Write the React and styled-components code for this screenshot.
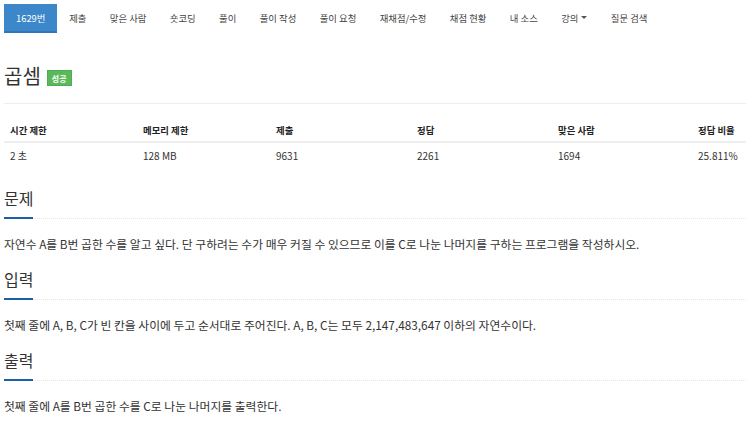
import React from "react";
import styled, { createGlobalStyle } from "styled-components";

const Global = createGlobalStyle`
  html, body { margin: 0; padding: 0; background: #fff; }
  body {
    font-family: "Noto Sans CJK KR", "Noto Sans", sans-serif;
    color: #333;
    font-size: 11px;
  }
`;

const Page = styled.div`
  padding: 4px 4px 0 4px;
  width: 742px;
`;

const Nav = styled.ul`
  display: flex;
  list-style: none;
  margin: 0;
  padding: 0;
  height: 29px;
`;

const NavItem = styled.li`
  display: flex;
  align-items: center;
  padding: 0 ${(p) => p.$px || 11.7}px;
  height: 29px;
  font-size: 9.4px;
  color: ${(p) => (p.$active ? "#fff" : "#444")};
  background: ${(p) => (p.$active ? "#3b87c9" : "transparent")};
  border-bottom: ${(p) => (p.$active ? "2px solid #2e77b8" : "2px solid transparent")};
  box-sizing: border-box;
  white-space: nowrap;
`;

const Caret = styled.span`
  display: inline-block;
  width: 0;
  height: 0;
  margin-left: 3px;
  border-left: 3px solid transparent;
  border-right: 3px solid transparent;
  border-top: 3px solid #555;
`;

const TitleRow = styled.div`
  display: flex;
  align-items: flex-end;
  gap: 6px;
  margin-top: 29px;
  padding-bottom: 13px;
  border-bottom: 1px solid #eee;
`;

const Title = styled.h1`
  margin: 0;
  font-size: 20px;
  font-weight: 400;
  line-height: 28px;
  color: #333;
`;

const Badge = styled.span`
  display: inline-flex;
  align-items: center;
  justify-content: center;
  height: 16px;
  padding: 0 4px;
  margin-bottom: 4px;
  background: #5cb85c;
  border: 1px solid #4cae4c;
  color: #fff;
  font-size: 8px;
  font-weight: 700;
  box-sizing: border-box;
`;

const Table = styled.table`
  width: 100%;
  table-layout: fixed;
  border-collapse: collapse;
  margin-top: 15px;
  font-size: 10px;
`;

const Th = styled.th`
  text-align: left;
  font-weight: 700;
  font-size: 9.4px;
  line-height: 14px;
  padding: 4px 6px 4px 6px;
  border-bottom: 2px solid #eee;
  color: #222;
  width: ${(p) => p.$w}px;
`;

const Td = styled.td`
  padding: 6px 6px;
  line-height: 14px;
  color: #333;
`;

const Section = styled.section`
  margin-top: ${(p) => p.$mt}px;
`;

const Headline = styled.div`
  display: flex;
  align-items: flex-end;
  border-bottom: 1px dotted #e4e4e4;
`;

const HeadText = styled.h2`
  margin: 0 0 -1px 0;
  font-size: 16px;
  font-weight: 400;
  line-height: 22px;
  padding-bottom: 8px;
  border-bottom: 2px solid #1d5ea8;
  color: #333;
`;

const Para = styled.p`
  margin: 16px 0 0 0;
  font-size: 11.8px;
  line-height: 18px;
  color: #333;
`;

const navs = [
  ["1629번", true, 12],
  ["제출"],
  ["맞은 사람"],
  ["숏코딩"],
  ["풀이"],
  ["풀이 작성"],
  ["풀이 요청"],
  ["재채점/수정"],
  ["채점 현황"],
  ["내 소스"],
  ["강의", false, 11.7, true],
  ["질문 검색"],
];

const cols = [
  ["시간 제한", "2 초", 121],
  ["메모리 제한", "128 MB", 121],
  ["제출", "9631", 129],
  ["정답", "2261", 129],
  ["맞은 사람", "1694", 128],
  ["정답 비율", "25.811%", 42],
];

export default function App() {
  return (
    <Page>
      <Global />
      <Nav>
        {navs.map(([t, a, px, caret]) => (
          <NavItem key={t} $active={a} $px={px}>
            {t}
            {caret && <Caret />}
          </NavItem>
        ))}
      </Nav>
      <TitleRow>
        <Title>곱셈</Title>
        <Badge>성공</Badge>
      </TitleRow>
      <Table>
        <thead>
          <tr>
            {cols.map(([h, , w]) => (
              <Th key={h} $w={w}>{h}</Th>
            ))}
          </tr>
        </thead>
        <tbody>
          <tr>
            {cols.map(([h, v]) => (
              <Td key={h}>{v}</Td>
            ))}
          </tr>
        </tbody>
      </Table>
      <Section $mt={18}>
        <Headline><HeadText>문제</HeadText></Headline>
        <Para>자연수 A를 B번 곱한 수를 알고 싶다. 단 구하려는 수가 매우 커질 수 있으므로 이를 C로 나눈 나머지를 구하는 프로그램을 작성하시오.</Para>
      </Section>
      <Section $mt={15}>
        <Headline><HeadText>입력</HeadText></Headline>
        <Para>첫째 줄에 A, B, C가 빈 칸을 사이에 두고 순서대로 주어진다. A, B, C는 모두 2,147,483,647 이하의 자연수이다.</Para>
      </Section>
      <Section $mt={15}>
        <Headline><HeadText>출력</HeadText></Headline>
        <Para>첫째 줄에 A를 B번 곱한 수를 C로 나눈 나머지를 출력한다.</Para>
      </Section>
    </Page>
  );
}
